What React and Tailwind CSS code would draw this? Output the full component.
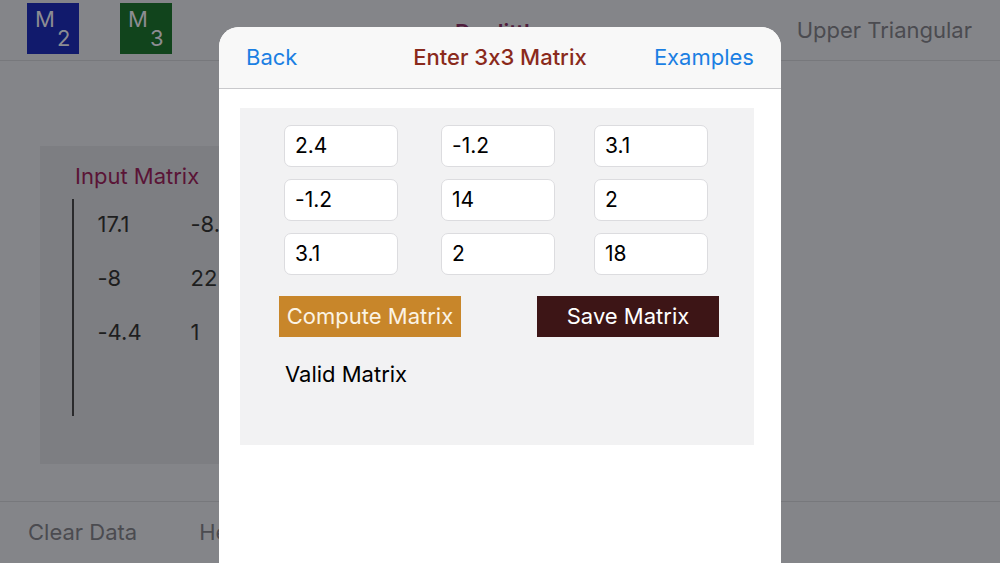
import React from 'react';

const rows = [
  ['2.4', '-1.2', '3.1'],
  ['-1.2', '14', '2'],
  ['3.1', '2', '18'],
];

const bgRows = [
  ['17.1', '-8.'],
  ['-8', '22'],
  ['-4.4', '1'],
];

const MBox = ({ sub, color }) => (
  <div className={`w-[52px] h-[51px] ${color} flex items-start pl-[8px] pt-[5px] text-[#8c8c92]`}>
    <span className="text-[22px] leading-none">M</span>
    <span className="text-[22px] leading-none mt-[19px] ml-[2px]">{sub}</span>
  </div>
);

const App = () => {
  return (
    <div className="relative w-[1000px] h-[563px] overflow-hidden bg-[#848589] font-['Inter','Noto_Sans',sans-serif] [font-feature-settings:'calt'_0]">
      {/* dimmed page behind the sheet */}
      <div className="flex flex-col h-full">
        <div className="h-[61px] border-b border-[#77787c] flex items-start pt-[3px] pl-[27px]">
          <MBox sub="2" color="bg-[#111a6c]" />
          <div className="ml-[41px]">
            <MBox sub="3" color="bg-[#11441c]" />
          </div>
          <div className="ml-[283px] mt-[13px] text-[22px] font-semibold text-[#4f1d3c]">Doolittle</div>
          <div className="ml-auto mr-[28px] mt-[11px] text-[22px] text-[#4b4b50]">Upper Triangular</div>
        </div>

        <div className="flex-1 pt-[85px] pl-[40px]">
          <div className="w-[400px] h-[318px] bg-[#7d7e82] pt-[15px] pl-[35px]">
            <div className="text-[22px] text-[#5a1436] leading-[30px]">Input Matrix</div>
            <div className="flex mt-[8px] -ml-[3px]">
              <div className="w-[1.5px] h-[217px] bg-[#2a2a2c]" />
              <div className="flex flex-col gap-[28px] pl-[24px] pt-[12px]">
                {bgRows.map((r, i) => (
                  <div key={i} className="flex text-[22px] leading-[26px] text-[#1e1e20]">
                    <span className="w-[93px]">{r[0]}</span>
                    <span>{r[1]}</span>
                  </div>
                ))}
              </div>
            </div>
          </div>
        </div>

        <div className="h-[62px] border-t border-[#77787c] flex items-center pl-[28px] text-[22px] text-[#4b4b50]">
          <span>Clear Data</span>
          <span className="ml-[62px]">Help</span>
        </div>
      </div>

      {/* modal sheet */}
      <div className="absolute left-[219px] top-[27px] w-[562px] h-[560px] bg-white rounded-t-[20px] overflow-hidden">
        <div className="h-[62px] bg-[#f8f8f8] border-b border-[#c9c9cc] grid grid-cols-[1fr_auto_1fr] items-center px-[27px] text-[22px]">
          <span className="text-[#1b7fe3]">Back</span>
          <span className="text-[#8a2a1c] font-medium">Enter 3x3 Matrix</span>
          <span className="text-[#1b7fe3] justify-self-end">Examples</span>
        </div>

        <div className="mt-[19px] ml-[21px] w-[514px] h-[337px] bg-[#f2f2f3] pt-[17px]">
          <div className="flex flex-col gap-[12px] pl-[44px]">
            {rows.map((r, i) => (
              <div key={i} className="grid grid-cols-[157px_153px_114px]">
                {r.map((v, j) => (
                  <div
                    key={j}
                    className="w-[114px] h-[42px] bg-white border border-[#dcdcdf] rounded-[7px] flex items-center pl-[10px] text-[21px] text-black"
                  >
                    {v}
                  </div>
                ))}
              </div>
            ))}
          </div>

          <div className="flex mt-[21px] pl-[39px]">
            <div className="w-[182px] h-[41px] bg-[#c8862a] flex items-center justify-center text-[22px] text-[#fbf3e4]">
              Compute Matrix
            </div>
            <div className="ml-[76px] w-[182px] h-[41px] bg-[#3d1516] flex items-center justify-center text-[22px] text-white">
              Save Matrix
            </div>
          </div>

          <div className="mt-[23px] pl-[45px] text-[22px] text-black leading-[28px]">Valid Matrix</div>
        </div>
      </div>
    </div>
  );
};

export default App;
